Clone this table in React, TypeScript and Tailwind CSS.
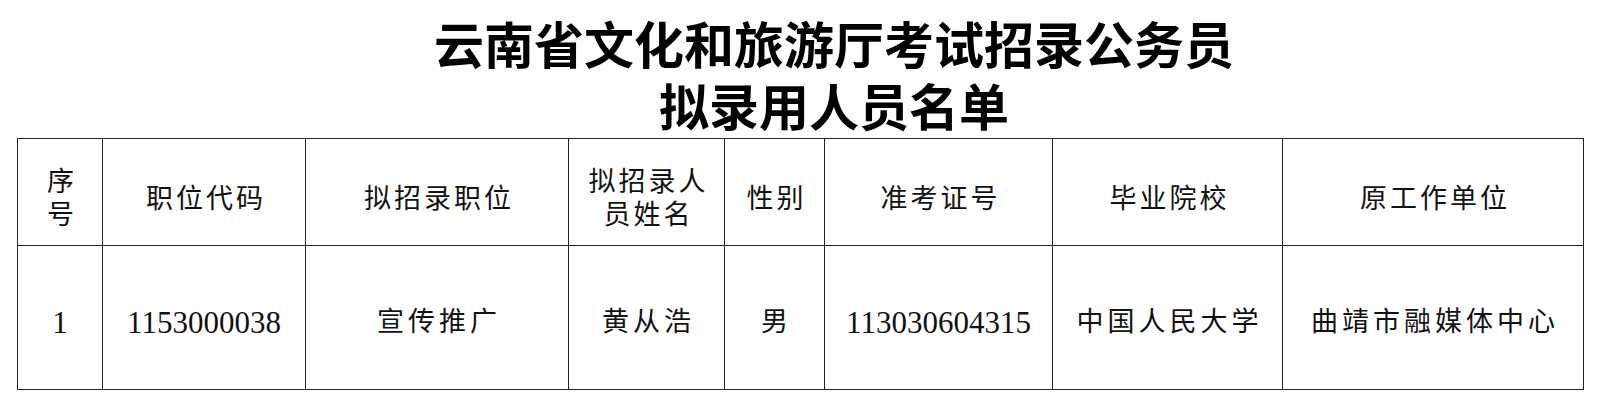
import React from 'react'

const cols = [85, 203, 263, 156, 100, 228, 230, 301]

const headers: React.ReactNode[] = [
    <>
        序<br />号
    </>,
    '职位代码',
    '拟招录职位',
    <>
        拟招录人
        <br />
        员姓名
    </>,
    '性别',
    '准考证号',
    '毕业院校',
    '原工作单位',
]

const row: { text: string; num?: boolean }[] = [
    { text: '1', num: true },
    { text: '1153000038', num: true },
    { text: '宣传推广' },
    { text: '黄从浩' },
    { text: '男' },
    { text: '113030604315', num: true },
    { text: '中国人民大学' },
    { text: '曲靖市融媒体中心' },
]

const App = () => {
    return (
        <div className="w-[1600px] h-[407px] bg-white text-[#111] overflow-hidden">
            <div className="pt-[11px] pl-[17px]">
                <div className="w-[1566px] pl-[68px] text-center text-black font-['Noto_Sans_CJK_SC',sans-serif] font-bold text-[50px] leading-[62px]">
                    <div>云南省文化和旅游厅考试招录公务员</div>
                    <div>拟录用人员名单</div>
                </div>
                <table className="mt-[3px] table-fixed border-collapse w-[1566px]">
                    <colgroup>
                        {cols.map((w, i) => (
                            <col key={i} style={{ width: w }} />
                        ))}
                    </colgroup>
                    <tbody>
                        <tr className="h-[107px]">
                            {headers.map((h, i) => (
                                <td
                                    key={i}
                                    className="border border-[#222] p-0 text-center align-middle font-['Noto_Sans_CJK_SC',sans-serif] text-[27px] leading-[33px] tracking-[3px]"
                                >
                                    <span className="relative top-[4px] left-[2px]">{h}</span>
                                </td>
                            ))}
                        </tr>
                        <tr className="h-[144px]">
                            {row.map((c, i) => (
                                <td
                                    key={i}
                                    className={
                                        c.num
                                            ? "border border-[#222] p-0 text-center align-middle font-['Liberation_Serif',serif] text-[31px]"
                                            : "border border-[#222] p-0 text-center align-middle font-['Noto_Sans_CJK_SC',sans-serif] text-[27px] tracking-[4px]"
                                    }
                                >
                                    <span className={c.num ? 'relative top-[6px]' : 'relative top-[3px] left-[2px]'}>
                                        {c.text}
                                    </span>
                                </td>
                            ))}
                        </tr>
                    </tbody>
                </table>
            </div>
        </div>
    )
}

export default App
